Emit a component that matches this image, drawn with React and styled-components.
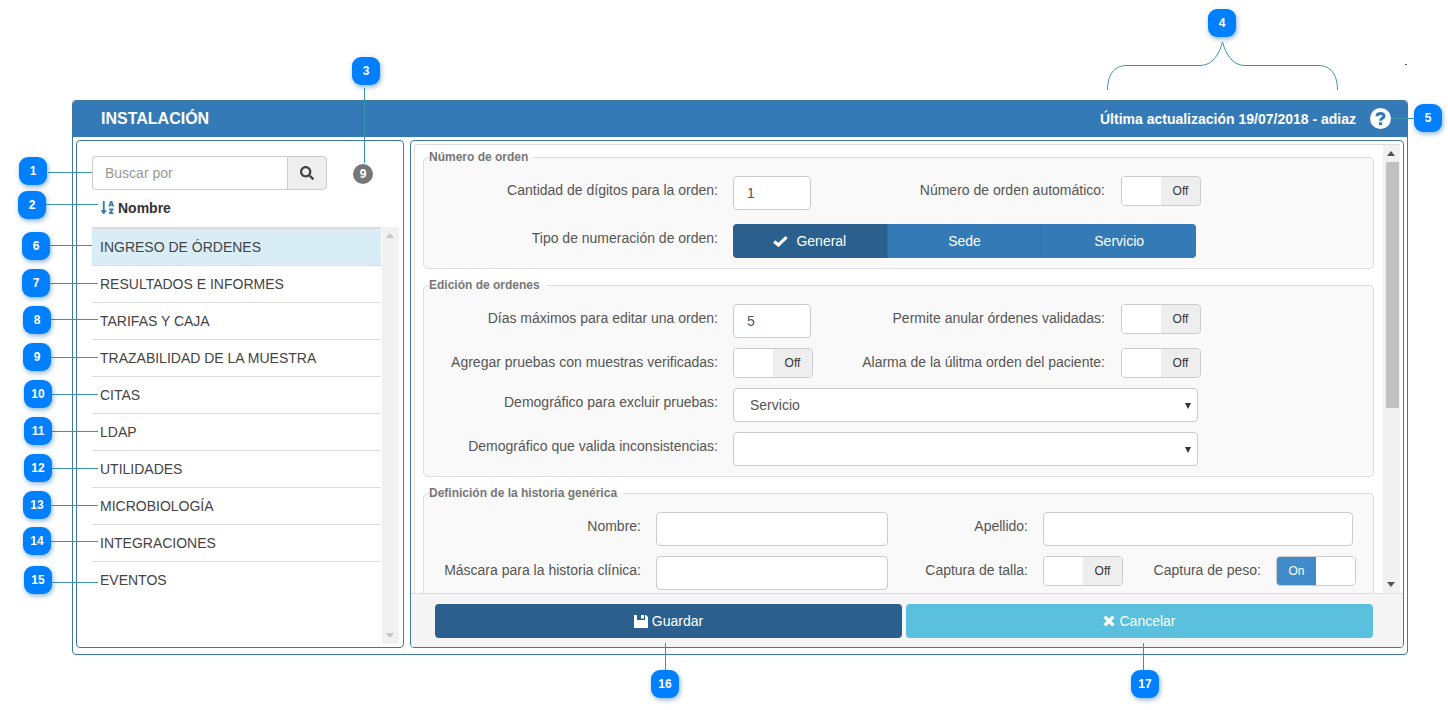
import React from 'react'
import styled, { createGlobalStyle } from 'styled-components'
import { FaSearch, FaSortAlphaDown } from 'react-icons/fa'

const GlobalStyle = createGlobalStyle`
  html, body { margin: 0; padding: 0; background: #fff; }
  body { font-family: 'Liberation Sans', Arial, sans-serif; font-size: 14px; color: #333; }
  * { box-sizing: border-box; }
`

const Page = styled.div`
  position: relative;
  width: 1448px;
  height: 710px;
  padding: 100px 0 0 72px;
  overflow: hidden;
`

const Panel = styled.div`
  width: 1336px;
  height: 555px;
  display: flex;
  flex-direction: column;
  border: 1px solid #3f7a9e;
  border-radius: 4px;
  overflow: hidden;
`

const Header = styled.div`
  height: 36px;
  flex: none;
  display: flex;
  align-items: center;
  justify-content: space-between;
  padding: 0 16px 0 28px;
  background: #337ab7;
  color: #fff;
`

const Title = styled.div`
  font-size: 16px;
  font-weight: bold;
`

const HeaderInfo = styled.div`
  display: flex;
  align-items: center;
  gap: 14px;
  padding-bottom: 1px;
  font-size: 14px;
  font-weight: bold;
`

const Body = styled.div`
  flex: 1;
  min-height: 0;
  display: flex;
  gap: 6px;
  padding: 3px 3px 6px;
`

const Pane = styled.div`
  width: ${p => p.$width}px;
  flex: none;
  display: flex;
  flex-direction: column;
  border: 1px solid #3f7a9e;
  border-radius: 4px;
  overflow: hidden;
`

const LeftPane = styled(Pane)`
  padding: 15px 4px 3px 15px;
`

const SearchRow = styled.div`
  display: flex;
  align-items: center;
`

const SearchInput = styled.input`
  width: 195px;
  height: 34px;
  padding: 0 12px;
  border: 1px solid #ccc;
  border-right: 0;
  border-radius: 4px 0 0 4px;
  font: 14px 'Liberation Sans', Arial, sans-serif;
  outline: none;
  &::placeholder { color: #999; opacity: 1; }
`

const SearchButton = styled.div`
  width: 40px;
  height: 34px;
  display: flex;
  align-items: center;
  justify-content: center;
  background: #eee;
  border: 1px solid #ccc;
  border-radius: 0 4px 4px 0;
  color: #444;
  font-size: 14px;
`

const CountBadge = styled.span`
  width: 20px;
  height: 20px;
  margin: 2px 0 0 26px;
  display: flex;
  align-items: center;
  justify-content: center;
  border-radius: 50%;
  background: #777;
  color: #fff;
  font-size: 12px;
  font-weight: bold;
`

const SortRow = styled.div`
  height: 37px;
  flex: none;
  display: flex;
  align-items: center;
  gap: 3px;
  padding: 0 0 2px 8px;
  font-weight: bold;
  color: #333;
  svg { color: #337ab7; font-size: 15px; }
`

const ListArea = styled.div`
  flex: 1;
  min-height: 0;
  display: flex;
  gap: 1px;
`

const List = styled.div`
  width: 289px;
  border-top: 2px solid #ddd;
`

const ListItem = styled.div`
  height: 37px;
  display: flex;
  align-items: center;
  padding-left: 8px;
  border-bottom: 1px solid ${p => (p.$last ? 'transparent' : '#ddd')};
  background: ${p => (p.$active ? '#d9edf7' : '#fff')};
  color: #444;
  font-size: 14px;
`

const ScrollTrack = styled.div`
  position: relative;
  width: 17px;
  flex: none;
  background: #f1f1f1;
  &::before, &::after {
    content: '';
    position: absolute;
    left: 4px;
    border-left: 4px solid transparent;
    border-right: 4px solid transparent;
  }
  &::before { top: 6px; border-bottom: 5px solid ${p => p.$arrow}; }
  &::after { bottom: 6px; border-top: 5px solid ${p => p.$arrow}; }
`

const ScrollThumb = styled.div`
  position: absolute;
  top: 17px;
  left: 3px;
  width: 13px;
  height: 246px;
  background: #c1c1c1;
`

const RightPane = styled(Pane)`
  padding: 3px 0 0;
`

const ScrollRegion = styled.div`
  flex: 1;
  min-height: 0;
  margin: 0 3px 0 3px;
  display: flex;
  border-top: 1px solid #ddd;
  border-left: 1px solid #ddd;
  border-radius: 4px 0 0 0;
`

const Content = styled.div`
  flex: 1;
  min-width: 0;
  overflow: hidden;
  padding: 5px 9px 0 8px;
`

const Group = styled.fieldset`
  margin: 0 0 9px;
  padding: 12px 0 10px;
  border: 1px solid #ddd;
  border-radius: 5px;
  background: #f9f9f9;
`

const Legend = styled.legend`
  margin-left: 5px;
  padding: 0 6px 0 0;
  font-size: 12px;
  line-height: 14px;
  font-weight: bold;
  color: #777;
`

const FormGrid = styled.div`
  display: grid;
  grid-template-columns: ${p => p.$columns};
  column-gap: 15px;
  row-gap: ${p => p.$rowGap}px;
  align-items: start;
`

const FieldLabel = styled.label`
  padding-top: 4px;
  padding-right: ${p => p.$inset || 0}px;
  line-height: 20px;
  text-align: right;
  color: #555;
  white-space: nowrap;
`

const TextInput = styled.input`
  width: ${p => p.$width}px;
  height: 34px;
  padding: 0 13px;
  border: 1px solid #ccc;
  border-radius: 4px;
  background: #fff;
  color: #555;
  font: 14px 'Liberation Sans', Arial, sans-serif;
  outline: none;
  ${p => p.$span && `grid-column: ${p.$span};`}
`

const SelectBox = styled.div`
  grid-column: span 3;
  position: relative;
  width: 465px;
  height: 34px;
  display: flex;
  align-items: center;
  padding: 0 16px;
  border: 1px solid #ccc;
  border-radius: 4px;
  background: #fff;
  color: #555;
  &::after {
    content: '';
    position: absolute;
    right: 6px;
    top: 14px;
    border-left: 3px solid transparent;
    border-right: 3px solid transparent;
    border-top: 6px solid #333;
  }
`

const Switch = styled.div`
  width: 80px;
  height: 30px;
  display: flex;
  border: 1px solid #ccc;
  border-radius: 4px;
  background: #fff;
  overflow: hidden;
  font-size: 12px;
`

const SwitchHalf = styled.span`
  width: 50%;
  display: flex;
  align-items: center;
  justify-content: center;
  background: ${p => (p.$on ? '#428bca' : p.$off ? '#eee' : '#fff')};
  color: ${p => (p.$on ? '#fff' : '#333')};
`

const Segmented = styled.div`
  grid-column: span 3;
  width: 463px;
  height: 34px;
  display: flex;
  border-radius: 4px;
  overflow: hidden;
`

const SegmentButton = styled.div`
  flex: 1;
  display: flex;
  align-items: center;
  justify-content: center;
  gap: 8px;
  background: ${p => (p.$active ? '#2a5f8e' : '#337ab7')};
  border-right: 1px solid #2e6da4;
  color: #fff;
  &:last-child { border-right: 0; }
`

const Footer = styled.div`
  height: 54px;
  flex: none;
  display: flex;
  gap: 4px;
  padding: 10px 30px 9px 24px;
  background: #f5f5f5;
  border-top: 1px solid #ddd;
`

const FooterButton = styled.div`
  flex: 1;
  display: flex;
  align-items: center;
  justify-content: center;
  gap: 4px;
  border-radius: 4px;
  background: ${p => (p.$variant === 'save' ? '#2a5f8e' : '#5bc0de')};
  color: #fff;
`

const Overlay = styled.svg`
  position: absolute;
  inset: 0;
  pointer-events: none;
`

const Callout = styled.div`
  position: absolute;
  left: ${p => p.$x - 14}px;
  top: ${p => p.$y - 14}px;
  width: 28px;
  height: 28px;
  display: flex;
  align-items: center;
  justify-content: center;
  border-radius: 9px;
  background: #007fff;
  box-shadow: 1px 2px 5px rgba(0, 90, 170, 0.45);
  color: #fff;
  font-size: 12px;
  font-weight: bold;
`

const menuItems = [
  'INGRESO DE ÓRDENES', 'RESULTADOS E INFORMES', 'TARIFAS Y CAJA', 'TRAZABILIDAD DE LA MUESTRA', 'CITAS',
  'LDAP', 'UTILIDADES', 'MICROBIOLOGÍA', 'INTEGRACIONES', 'EVENTOS'
]

const callouts = [
  [1, 33, 171], [2, 32, 205], [3, 366, 71], [4, 1222, 23], [5, 1428, 118], [6, 36, 246], [7, 36, 283],
  [8, 37, 320], [9, 37, 357], [10, 38, 394], [11, 38, 431], [12, 38, 468], [13, 37, 505], [14, 37, 541],
  [15, 38, 580], [16, 665, 684], [17, 1145, 684]
]

const leaders = [
  'M48 172.5H92', 'M46 204.5H98', 'M364.5 88V163', 'M1392 118.5H1414', 'M50 245.5H92', 'M50 283.5H98',
  'M51 319.5H98', 'M51 357.5H98', 'M52 394.5H98', 'M52 431.5H98', 'M52 468.5H98', 'M51 505.5H98',
  'M51 541.5H98', 'M52 582.5H98', 'M665.5 643V670', 'M1143.5 643V670',
  'M1107.5 90C1107.5 75 1114 65.5 1127 65.5H1200C1212 65.5 1219 55 1222.5 42C1226 55 1233 65.5 1245 65.5H1318C1331 65.5 1337.5 75 1337.5 90'
]

const HelpIcon = () => (
  <svg width="21" height="21" viewBox="0 0 21 21">
    <circle cx="10.5" cy="10.5" r="10.5" fill="#fff" />
    <path d="M7 8.2C7 4.8 14 4.6 14 8C14 10.4 10.5 10.2 10.5 12.8" fill="none" stroke="#337ab7" strokeWidth="3" />
    <rect x="9" y="14.2" width="3" height="3" fill="#337ab7" />
  </svg>
)

const CheckIcon = () => (
  <svg width="15" height="11" viewBox="0 0 15 11">
    <path d="M1.2 5.5L5.4 9L13.6 1.2" fill="none" stroke="#fff" strokeWidth="3.2" />
  </svg>
)

const SaveIcon = () => (
  <svg width="14" height="13" viewBox="0 0 14 13">
    <path fill="#fff" fillRule="evenodd" d="M0 0H3V5H11V0H12L14 2V13H0Z" />
    <rect x="7" y="0" width="3" height="3.5" fill="#fff" />
  </svg>
)

const CloseIcon = () => (
  <svg width="12" height="12" viewBox="0 0 12 12">
    <path d="M1.6 1.6L10.4 10.4M10.4 1.6L1.6 10.4" fill="none" stroke="#fff" strokeWidth="3.4" />
  </svg>
)

const Toggle = ({ on }) => (
  <Switch>
    {on ? <SwitchHalf $on>On</SwitchHalf> : <SwitchHalf />}
    {on ? <SwitchHalf /> : <SwitchHalf $off>Off</SwitchHalf>}
  </Switch>
)

const App = () => (
  <Page>
    <GlobalStyle />
    <Panel>
      <Header>
        <Title>INSTALACIÓN</Title>
        <HeaderInfo>
          Última actualización 19/07/2018 - adiaz
          <HelpIcon />
        </HeaderInfo>
      </Header>
      <Body>
        <LeftPane $width={328}>
          <SearchRow>
            <SearchInput placeholder="Buscar por" />
            <SearchButton><FaSearch /></SearchButton>
            <CountBadge>9</CountBadge>
          </SearchRow>
          <SortRow><FaSortAlphaDown />Nombre</SortRow>
          <ListArea>
            <List>
              {menuItems.map((item, index) => (
                <ListItem key={item} $active={index === 0} $last={index === menuItems.length - 1}>{item}</ListItem>
              ))}
            </List>
            <ScrollTrack $arrow="#c4c4c4" />
          </ListArea>
        </LeftPane>
        <RightPane $width={994}>
          <ScrollRegion>
            <Content>
              <Group>
                <Legend>Número de orden</Legend>
                <FormGrid $columns="294px 80px 278px auto" $rowGap={14}>
                  <FieldLabel>Cantidad de dígitos para la orden:</FieldLabel>
                  <TextInput $width={78} defaultValue="1" readOnly />
                  <FieldLabel $inset={1}>Número de orden automático:</FieldLabel>
                  <Toggle />
                  <FieldLabel>Tipo de numeración de orden:</FieldLabel>
                  <Segmented>
                    <SegmentButton $active><CheckIcon />General</SegmentButton>
                    <SegmentButton>Sede</SegmentButton>
                    <SegmentButton>Servicio</SegmentButton>
                  </Segmented>
                </FormGrid>
              </Group>
              <Group>
                <Legend>Edición de ordenes</Legend>
                <FormGrid $columns="294px 80px 278px auto" $rowGap={10}>
                  <FieldLabel>Días máximos para editar una orden:</FieldLabel>
                  <TextInput $width={78} defaultValue="5" readOnly />
                  <FieldLabel $inset={1}>Permite anular órdenes validadas:</FieldLabel>
                  <Toggle />
                  <FieldLabel>Agregar pruebas con muestras verificadas:</FieldLabel>
                  <Toggle />
                  <FieldLabel $inset={1}>Alarma de la úlitma orden del paciente:</FieldLabel>
                  <Toggle />
                  <FieldLabel>Demográfico para excluir pruebas:</FieldLabel>
                  <SelectBox>Servicio</SelectBox>
                  <FieldLabel>Demográfico que valida inconsistencias:</FieldLabel>
                  <SelectBox />
                </FormGrid>
              </Group>
              <Group>
                <Legend>Definición de la historia genérica</Legend>
                <FormGrid $columns="217px 232px 125px 80px 123px 80px" $rowGap={10}>
                  <FieldLabel>Nombre:</FieldLabel>
                  <TextInput $width={232} readOnly />
                  <FieldLabel>Apellido:</FieldLabel>
                  <TextInput $width={310} $span="span 3" readOnly />
                  <FieldLabel>Máscara para la historia clínica:</FieldLabel>
                  <TextInput $width={232} readOnly />
                  <FieldLabel>Captura de talla:</FieldLabel>
                  <Toggle />
                  <FieldLabel>Captura de peso:</FieldLabel>
                  <Toggle on />
                </FormGrid>
              </Group>
            </Content>
            <ScrollTrack $arrow="#555">
              <ScrollThumb />
            </ScrollTrack>
          </ScrollRegion>
          <Footer>
            <FooterButton $variant="save"><SaveIcon />Guardar</FooterButton>
            <FooterButton $variant="cancel"><CloseIcon />Cancelar</FooterButton>
          </Footer>
        </RightPane>
      </Body>
    </Panel>
    <Overlay width="1448" height="710" fill="none" stroke="#3a94b0" strokeWidth="1">
      {leaders.map(d => <path key={d} d={d} />)}
      <path d="M1405 64.5H1407" stroke="#555" />
    </Overlay>
    {callouts.map(([n, x, y]) => <Callout key={n} $x={x} $y={y}>{n}</Callout>)}
  </Page>
)

export default App
